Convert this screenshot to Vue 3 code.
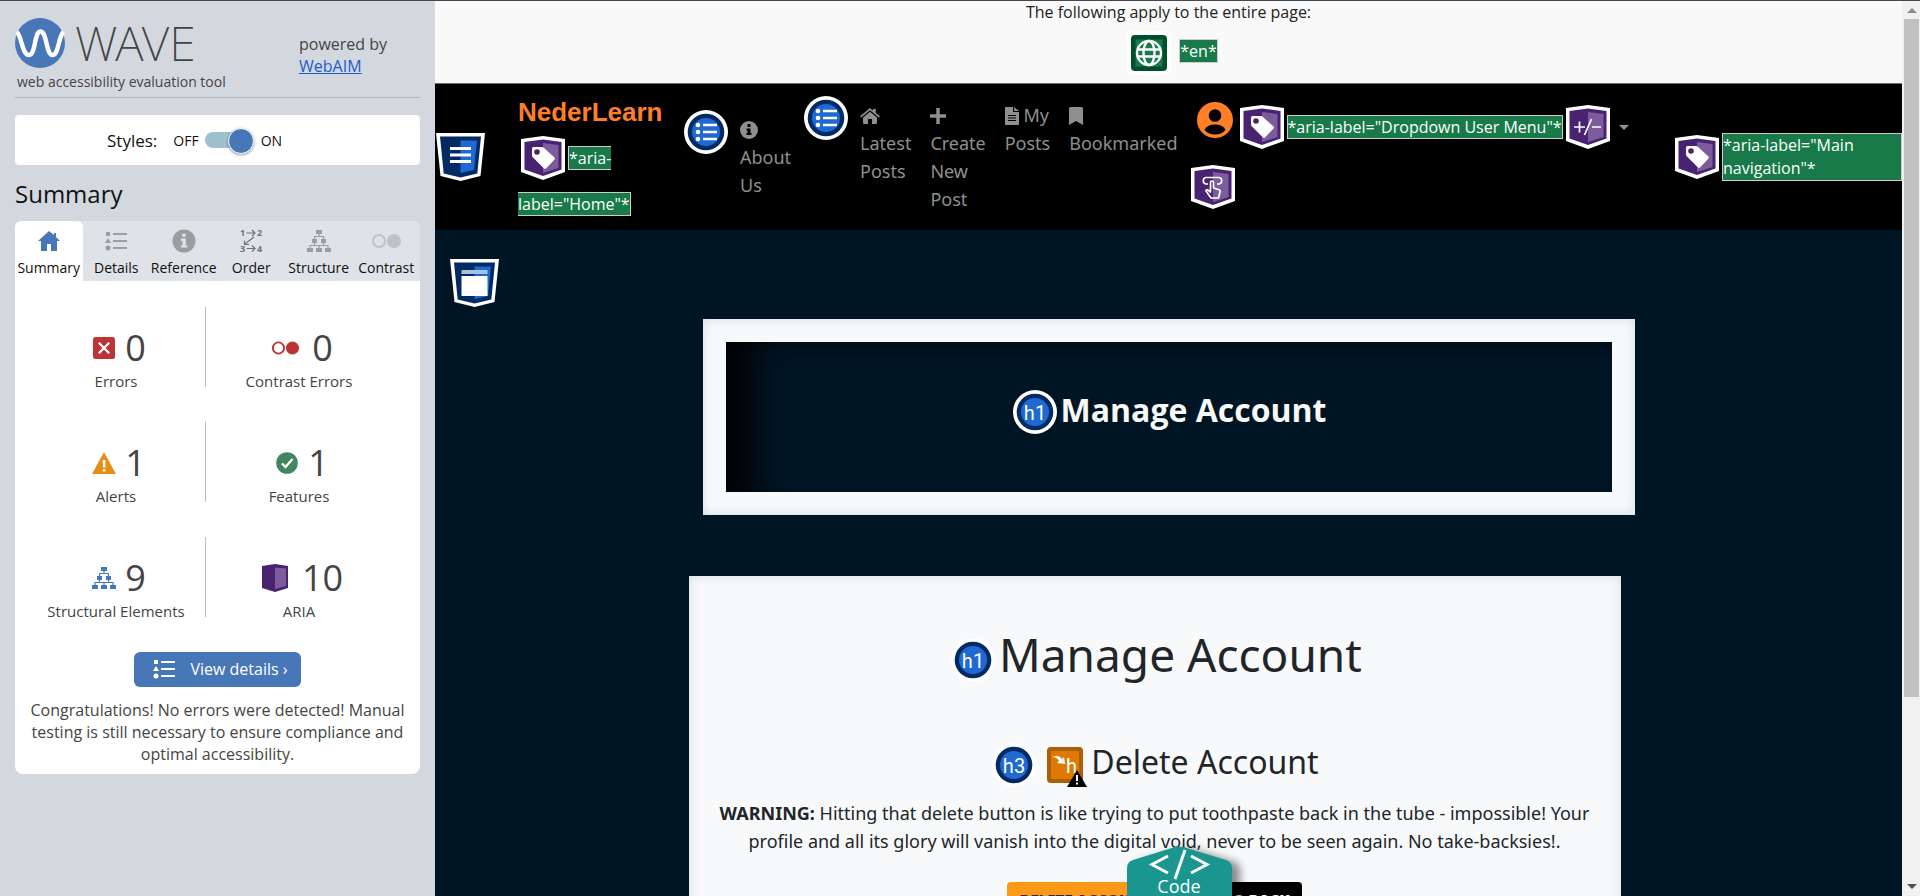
<script setup>
import { ref } from 'vue'

const stylesOn = ref(true)
const activeTab = ref('Summary')

const tabs = [
  { name: 'Summary', icon: 'i-home' },
  { name: 'Details', icon: 'i-details' },
  { name: 'Reference', icon: 'i-info' },
  { name: 'Order', icon: 'i-order' },
  { name: 'Structure', icon: 'i-tree' },
  { name: 'Contrast', icon: 'i-contrast' },
]

const stats = [
  { label: 'Errors', count: 0, icon: 'i-error', tone: 'red' },
  { label: 'Contrast Errors', count: 0, icon: 'i-contrast', tone: 'red wide' },
  { label: 'Alerts', count: 1, icon: 'i-alert', tone: 'amber' },
  { label: 'Features', count: 1, icon: 'i-check', tone: 'green' },
  { label: 'Structural Elements', count: 9, icon: 'i-tree', tone: 'blue' },
  { label: 'ARIA', count: 10, icon: 'i-cube', tone: 'purple wide' },
]
</script>

<template>
  <svg class="sprite" aria-hidden="true">
    <symbol id="i-home" viewBox="0 0 24 24">
      <path d="M12 2 1 12h3v10h6v-7h4v7h6V12h3l-4-4V4h-2v2z" fill="currentColor" />
    </symbol>
    <symbol id="i-details" viewBox="0 0 24 24">
      <path d="M2 3h4v4H2zM4 9l3 5H1zM9 4h14v2H9zM9 11h14v2H9zM9 18h14v2H9z" fill="currentColor" />
      <circle cx="4" cy="19" r="2.5" fill="currentColor" />
    </symbol>
    <symbol id="i-info" viewBox="0 0 24 24">
      <circle cx="12" cy="12" r="11.5" fill="currentColor" />
      <path d="M10.2 4.8h3.6v3h-3.6zM8.8 9.6h5v6.8h1.6v2.2H8.8v-2.2h1.6v-4.6H8.8z" fill="#dfe2e7" />
    </symbol>
    <symbol id="i-order" viewBox="0 0 24 24">
      <path d="M7.500 4H16M13 1l3 3-3 3M15 8 6 15M5.500 11.500v4h4.500M7.500 19.500H16M13 16.500l3 3-3 3" fill="none" stroke="currentColor" stroke-width="1.200" />
      <g fill="currentColor" font-family="Open Sans, sans-serif" font-size="9" font-weight="700">
        <text x="1" y="7">1</text><text x="18" y="7">2</text>
        <text x="1" y="23">3</text><text x="18" y="23">4</text>
      </g>
    </symbol>
    <symbol id="i-tree" viewBox="0 0 24 24">
      <path d="M9 1h6v4H9zM5 10h5v4H5zM14 10h5v4h-5zM0 19h6v4H0zM9 19h6v4H9zM18 19h6v4h-6z" fill="currentColor" />
      <path d="M12 5v2.500M7.500 10V7.500h9V10M7.500 14v2.500M16.500 14v2.500M3 19v-2.500h18V19M12 16.500V19" fill="none" stroke="currentColor" stroke-width="1.200" />
    </symbol>
    <symbol id="i-contrast" viewBox="0 0 30 24">
      <circle cx="8" cy="12" r="6" fill="none" stroke="currentColor" stroke-width="2" />
      <circle cx="23" cy="12" r="7" fill="currentColor" />
    </symbol>
    <symbol id="i-error" viewBox="0 0 24 24">
      <rect x="1" y="1" width="22" height="22" rx="2.500" fill="currentColor" />
      <path d="m6.800 6.800 10.400 10.400M17.200 6.800 6.800 17.200" stroke="#fff" stroke-width="2.300" />
    </symbol>
    <symbol id="i-alert" viewBox="0 0 24 24">
      <path d="M12 1 24 23H0z" fill="currentColor" />
      <path d="M10.800 9h2.600v7.500h-2.600zM10.800 18h2.600v2.600h-2.600z" fill="#fff" />
    </symbol>
    <symbol id="i-check" viewBox="0 0 24 24">
      <circle cx="12" cy="12" r="10.800" fill="currentColor" />
      <path d="m7 12.500 3.500 3.500 7-8" fill="none" stroke="#fff" stroke-width="2.400" />
    </symbol>
    <symbol id="i-cube" viewBox="0 0 28 28">
      <path d="M1 2 14 0l13 2v22l-13 4-13-4z" fill="#492270" />
      <path d="M14 3.500 25 4.500V22l-11 3z" fill="#7d5c9e" />
    </symbol>
    <symbol id="i-ring" viewBox="0 0 44 44">
      <circle cx="22" cy="22" r="22" fill="#fff" />
      <circle cx="22" cy="22" r="18.300" fill="#022a63" />
      <circle cx="22" cy="22" r="14" fill="#1e69d2" />
    </symbol>
    <symbol id="i-list" viewBox="0 0 44 44">
      <use href="#i-ring" />
      <path d="M19 15h14M19 22h14M19 29h14" stroke="#fff" stroke-width="2.400" />
      <g fill="#fff"><circle cx="14" cy="15" r="2.300" /><circle cx="14" cy="22" r="2.300" /><circle cx="14" cy="29" r="2.300" /></g>
    </symbol>
    <symbol id="i-h1" viewBox="0 0 44 44">
      <use href="#i-ring" />
      <text x="22" y="30" text-anchor="middle" fill="#fff" font-family="Roboto, sans-serif" font-size="20" font-weight="400">h1</text>
    </symbol>
    <symbol id="i-h3" viewBox="0 0 44 44">
      <use href="#i-ring" />
      <text x="22" y="30" text-anchor="middle" fill="#fff" font-family="Roboto, sans-serif" font-size="20" font-weight="400">h3</text>
    </symbol>
    <symbol id="i-skipped" viewBox="0 0 44 44">
      <rect x="4" y="4" width="36" height="36" rx="4" fill="#ab5f06" />
      <rect x="8" y="8" width="28" height="28" rx="1" fill="#de7a04" />
      <path d="M9 14c5-2 8-1 10 2l2-2 1 7-8-1 2-2c-1-2-3-4-7-4z" fill="#fff" />
      <text x="23" y="30" fill="#fff" font-family="Roboto, sans-serif" font-size="20" font-weight="400">h</text>
      <path d="m34 27 10 17H24z" fill="#000" />
      <path d="M33 32h2v6h-2zM33 39.500h2v2h-2z" fill="#fff" />
    </symbol>
    <symbol id="i-globe" viewBox="0 0 44 44">
      <rect x="0" y="0" width="44" height="44" rx="5" fill="#fff" />
      <rect x="4" y="4" width="36" height="36" rx="4" fill="#02502a" />
      <rect x="8.500" y="8.500" width="27" height="27" fill="#177a48" />
      <g fill="none" stroke="#fff" stroke-width="2.400">
        <circle cx="22" cy="22" r="12" /><ellipse cx="22" cy="22" rx="5.500" ry="12" />
        <path d="M11 18.500h22M11 25.500h22" />
      </g>
    </symbol>
    <symbol id="i-shield" viewBox="0 0 50 48">
      <path d="M0 0h49l-4.500 43L24.500 48 4.500 43z" fill="#fff" />
      <path d="M4 3.500h41L41.300 40.500 24.500 44.500 7.700 40.500z" fill="#022a63" />
      <path d="M24.500 7.500H41L38 37l-13.500 3z" fill="#1e69d2" />
    </symbol>
    <symbol id="i-nav" viewBox="0 0 50 48">
      <use href="#i-shield" />
      <path d="M14 15.500h21M14 22h21M14 28.500h21" stroke="#fff" stroke-width="3" />
    </symbol>
    <symbol id="i-main" viewBox="0 0 50 48">
      <use href="#i-shield" />
      <path d="M11.500 11h26v4h-26z" fill="#a9c0e2" />
      <path d="M11.500 17h26v20h-26z" fill="#fff" />
    </symbol>
    <symbol id="i-aria" viewBox="0 0 44 44">
      <path d="M0 3 22 0l22 3v33l-22 8-22-8z" fill="#fff" />
      <path d="M3.500 6 22 3.500 40.500 6v27.500L22 40 3.500 33.500z" fill="#492270" />
      <path d="M22 7 37.500 9v23L22 37z" fill="#7d5c9e" />
    </symbol>
    <symbol id="i-tag" viewBox="0 0 44 44">
      <use href="#i-aria" />
      <path d="M11 12.500q0-1.500 1.500-1.500H21q1 0 2 1l10.500 9.500q.8 1 0 2L25 32.500q-1 .8-2 0L11.500 21q-.5-1-.5-2z" fill="#fff" />
      <circle cx="16" cy="16" r="2.800" fill="#492270" />
    </symbol>
    <symbol id="i-expand" viewBox="0 0 44 44">
      <use href="#i-aria" />
      <path d="M8 22h11M13.500 16.500v11M25.500 14 18.500 30M26 22h9" stroke="#fff" stroke-width="1.700" />
    </symbol>
    <symbol id="i-press" viewBox="0 0 44 44">
      <use href="#i-aria" />
      <g fill="none" stroke="#fff" stroke-width="1.700" stroke-linejoin="round">
        <path d="M17 19h-2a3.300 3.300 0 0 1 0-6.500h13a3.300 3.300 0 0 1 0 6.500h-2" />
        <path d="M19.500 27V17.500q0-1.500 1.500-1.500t1.500 1.500V23l5 1.500q2 .5 1.500 2.500L27.500 33H20l-5-7q0-1.500 1.500-1.200z" />
      </g>
    </symbol>
    <symbol id="i-fa-info" viewBox="0 0 18 18">
      <circle cx="9" cy="9" r="9" fill="currentColor" />
      <path d="M7.500 3h3v3h-3zM6.500 7.500h4v4.500h1v2h-5v-2h1V9.500h-1z" fill="#000" />
    </symbol>
    <symbol id="i-fa-home" viewBox="0 0 20 18">
      <path d="M10 4.800 17 10.500V16q0 1-1 1h-4v-5H8v5H4q-1 0-1-1v-5.500zM10 1l3 2.500V2h2.800v4L20 9.300l-1.200 1.200L10 3.300 1.200 10.500 0 9.300z" fill="currentColor" />
    </symbol>
    <symbol id="i-fa-plus" viewBox="0 0 16 18">
      <path d="M6.300 1h3.400v6.300H16v3.400H9.700V17H6.300v-6.300H0V7.300h6.300z" fill="currentColor" />
    </symbol>
    <symbol id="i-fa-file" viewBox="0 0 14 18">
      <path d="M0 1q0-1 1-1h7v5h6v12q0 1-1 1H1q-1 0-1-1zM9.200 0 14 4H9.200z" fill="currentColor" />
      <path d="M3 8.500h8M3 11h8M3 13.500h8" stroke="#000" stroke-width="1" />
    </symbol>
    <symbol id="i-fa-bookmark" viewBox="0 0 14 18">
      <path d="M0 1.500Q0 0 1.500 0h11Q14 0 14 1.500V18l-7-4-7 4z" fill="currentColor" />
    </symbol>
  </svg>

  <div class="window">
    <aside class="sidebar">
      <header class="masthead">
        <div>
          <div class="logo">
            <svg viewBox="0 0 50 50" width="50" height="50" aria-hidden="true">
              <circle cx="25" cy="25" r="25" fill="#4877b8" />
              <path d="M2 14C7 19 7 37 14 37S19 13.500 25.500 13.500 31 37 37.500 37 43 19 48.500 14" fill="none" stroke="#fff" stroke-width="4.400" />
            </svg>
            <span class="wordmark">WAVE</span>
          </div>
          <p class="tagline">web accessibility evaluation tool</p>
        </div>
        <p class="powered">powered by<br /><a href="#webaim">WebAIM</a></p>
      </header>

      <div class="styles-box">
        <span class="styles-name">Styles:</span>
        <label class="switch">
          <span>OFF</span>
          <input v-model="stylesOn" type="checkbox" role="switch" aria-label="Styles" />
          <span class="on">ON</span>
        </label>
      </div>

      <h2 class="heading">Summary</h2>

      <div class="tabs" role="tablist">
        <button
          v-for="tab in tabs"
          :key="tab.name"
          type="button"
          role="tab"
          :aria-selected="activeTab === tab.name"
          :class="['tab', 'tab-' + tab.name.toLowerCase(), { active: activeTab === tab.name }]"
          @click="activeTab = tab.name"
        >
          <svg class="tab-icon"><use :href="'#' + tab.icon" /></svg>
          <span>{{ tab.name }}</span>
        </button>
      </div>

      <section class="panel">
        <ul class="stats">
          <li v-for="stat in stats" :key="stat.label">
            <div class="figure" :class="stat.tone">
              <svg><use :href="'#' + stat.icon" /></svg>
              <span>{{ stat.count }}</span>
            </div>
            <div class="label">{{ stat.label }}</div>
          </li>
        </ul>
        <button type="button" class="details">
          <svg width="24" height="24"><use href="#i-details" /></svg>
          <span>View details ›</span>
        </button>
        <p class="message">
          Congratulations! No errors were detected! Manual testing is still necessary to ensure compliance and optimal accessibility.
        </p>
      </section>
    </aside>

    <div class="page">
      <div class="entire">
        <p>The following apply to the entire page:</p>
        <div class="entire-row">
          <svg class="badge"><use href="#i-globe" /></svg>
          <span class="note">*en*</span>
        </div>
      </div>

      <nav class="nav" aria-label="Main navigation">
        <svg class="shield"><use href="#i-nav" /></svg>
        <div class="brand">
          <a href="#home" class="brand-name">NederLearn</a>
          <div class="brand-note"><svg class="badge"><use href="#i-tag" /></svg><span class="note">*aria-label="Home"*</span></div>
        </div>
        <div class="group low">
          <svg class="badge"><use href="#i-list" /></svg>
          <a href="#about"><svg width="18" height="18"><use href="#i-fa-info" /></svg> About Us</a>
        </div>
        <div class="group">
          <svg class="badge"><use href="#i-list" /></svg>
          <a href="#latest"><svg width="20" height="18"><use href="#i-fa-home" /></svg> Latest Posts</a>
          <a href="#create"><svg width="16" height="18"><use href="#i-fa-plus" /></svg> Create New Post</a>
          <a href="#mine"><svg width="14" height="18"><use href="#i-fa-file" /></svg>&nbsp;My Posts</a>
          <a href="#bookmarked"><svg width="14" height="18"><use href="#i-fa-bookmark" /></svg> Bookmarked</a>
        </div>
        <div class="user">
          <button type="button" class="user-row">
            <svg class="avatar" viewBox="0 0 36 36">
              <circle cx="18" cy="18" r="18" fill="#ff7f27" />
              <circle cx="18" cy="13.500" r="6.300" fill="#000" />
              <path d="M7.500 28q2-5.500 10.500-5.500T28.500 28q-4 4.500-10.500 4.500T7.500 28z" fill="#000" />
            </svg>
            <svg class="badge"><use href="#i-tag" /></svg>
            <span class="note">*aria-label="Dropdown User Menu"*</span>
            <svg class="badge"><use href="#i-expand" /></svg>
            <span class="caret"></span>
          </button>
          <svg class="badge press"><use href="#i-press" /></svg>
        </div>
        <div class="nav-end">
          <svg class="badge"><use href="#i-tag" /></svg>
          <span class="note">*aria-label="Main navigation"*</span>
        </div>
      </nav>

      <main class="main">
        <svg class="shield"><use href="#i-main" /></svg>
        <section class="card hero">
          <div class="hero-inner">
            <h1><svg class="badge"><use href="#i-h1" /></svg>Manage Account</h1>
          </div>
        </section>
        <section class="card body">
          <h1><svg class="badge"><use href="#i-h1" /></svg>Manage Account</h1>
          <h3>
            <svg class="badge"><use href="#i-h3" /></svg>
            <svg class="badge"><use href="#i-skipped" /></svg>
            <span>Delete Account</span>
          </h3>
          <p>
            <strong>WARNING:</strong> Hitting that delete button is like trying to put toothpaste back in the tube - impossible! Your profile and all its glory will vanish into the digital void, never to be seen again. No take-backsies!.
          </p>
          <div class="actions">
            <button type="button" class="delete">DELETE ACCOUNT</button>
            <button type="button" class="back">GO BACK</button>
          </div>
        </section>
      </main>
    </div>

    <div class="scrollbar" aria-hidden="true">
      <span class="arrow up"></span>
      <span class="thumb"></span>
      <span class="arrow down"></span>
    </div>

    <div class="dock">
      <button type="button" class="code">
        <svg class="code-shape" viewBox="0 0 105 64" width="105" height="64" aria-hidden="true">
          <path d="M0 22q0-6 6-8L48 1q4-1 8 0l43 13q6 2 6 8v42H0z" fill="#18968f" />
          <path d="M41 10 25 18.500 41 27M64 10l16 8.500L64 27M58 4 48 33" fill="none" stroke="#fff" stroke-width="3" />
        </svg>
        <span>Code</span>
      </button>
    </div>
  </div>
</template>

<style>
body {
  margin: 0;
  overflow: hidden;
}
</style>

<style scoped>
* {
  box-sizing: border-box;
}
.sprite {
  position: absolute;
  width: 0;
  height: 0;
}
p,
h1,
h2,
h3,
ul {
  margin: 0;
  padding: 0;
}
button {
  border: 0;
  padding: 0;
  background: none;
  font: inherit;
  color: inherit;
}
.window {
  position: relative;
  display: flex;
  height: 100vh;
  overflow: hidden;
  border-top: 1px solid #45484d;
  font-family: "Open Sans", "Noto Sans", sans-serif;
  font-size: 16px;
  color: #444;
}

/* Sidebar */
.sidebar {
  flex: 0 0 435px;
  padding: 17px 15px 0;
  background: #d3d8df;
}
.masthead {
  display: flex;
  justify-content: space-between;
  height: 80px;
  border-bottom: 1px solid #b0b4ba;
}
.logo {
  display: flex;
  align-items: center;
  gap: 10px;
  height: 50px;
}
.wordmark {
  font-family: "Noto Sans", sans-serif;
  font-size: 48px;
  font-weight: 200;
  line-height: 50px;
}
.tagline {
  padding-left: 2px;
  font-size: 14px;
  line-height: 28px;
}
.powered {
  width: 121px;
  padding-top: 15px;
  line-height: 22px;
}
.powered a {
  color: #1a5cc8;
}
.styles-box {
  display: flex;
  align-items: center;
  height: 50px;
  margin-top: 17px;
  padding-left: 92px;
  border-radius: 4px;
  background: #fff;
  color: #111;
}
.styles-name {
  font-size: 17px;
}
.switch {
  display: flex;
  align-items: center;
  margin-left: 16px;
  font-size: 14px;
}
.switch input {
  appearance: none;
  position: relative;
  width: 40px;
  height: 16px;
  margin: 0 0 0 6px;
  border-radius: 8px;
  background: #9fc1cc;
}
.switch input::after {
  content: "";
  position: absolute;
  top: -4px;
  left: -6px;
  width: 24px;
  height: 24px;
  border: 1px solid #fff;
  border-radius: 50%;
  background: #4877b8;
  box-shadow: 0 1px 3px rgba(0, 0, 0, 0.4);
}
.switch input:checked::after {
  left: 23px;
}
.switch .on {
  margin-left: 16px;
}
.heading {
  margin-top: 13px;
  font-size: 24px;
  font-weight: 400;
  line-height: 32px;
  color: #111;
}
.tabs {
  display: grid;
  grid-template-columns: repeat(6, minmax(0, 1fr));
  height: 60px;
  margin-top: 11px;
  border-radius: 6px 6px 0 0;
  background: #dfe2e7;
}
.tab {
  display: flex;
  flex-direction: column;
  align-items: center;
  gap: 5px;
  padding-top: 8px;
  font-size: 14px;
  line-height: 20px;
  color: #111;
}
.tab.active {
  border-radius: 6px 6px 0 0;
  background: #fff;
}
.tab-icon {
  width: 24px;
  height: 24px;
  color: #9b9da1;
}
.tab.active .tab-icon {
  color: #4877b8;
}
.tab-order .tab-icon {
  color: #707276;
}
.tab-contrast .tab-icon {
  width: 30px;
  color: #bfc1c5;
}
.panel {
  padding: 26px 12px 9px;
  border-radius: 0 0 8px 8px;
  background: #fff;
  text-align: center;
}
.stats {
  display: grid;
  grid-template-columns: 179fr 186fr;
  row-gap: 35px;
  margin-right: 16px;
  list-style: none;
}
.stats li {
  height: 80px;
  padding-top: 21px;
}
.stats li:nth-child(odd) {
  border-right: 1px solid #bbb;
}
.figure {
  display: flex;
  justify-content: center;
  align-items: center;
  gap: 9px;
  height: 40px;
  padding-left: 6px;
}
.figure svg {
  width: 24px;
  height: 24px;
}
.figure.wide {
  gap: 13px;
}
.figure.wide svg {
  width: 28px;
  height: 28px;
}
.figure span {
  font-size: 36px;
  line-height: 40px;
}
.red svg {
  color: #bd3338;
}
.amber svg {
  color: #e68f17;
}
.green svg {
  color: #41865f;
}
.blue svg {
  color: #4877b8;
}
.label {
  font-size: 15px;
  line-height: 26px;
}
.details {
  display: inline-flex;
  align-items: center;
  gap: 14px;
  height: 35px;
  margin: 35px 0 12px;
  padding: 0 13px 2px 18px;
  border-radius: 6px;
  background: #4877b8;
  color: #fff;
}
.message {
  line-height: 22px;
}

/* Evaluated page */
.page {
  flex: 1;
  min-width: 0;
  background: #001524;
}
.badge {
  flex: none;
  width: 44px;
  height: 44px;
}
.shield {
  flex: none;
  width: 50px;
  height: 48px;
}
.note {
  border: 1px solid #ccc;
  background: #177a48;
  color: #fff;
  font-size: 16px;
  line-height: 22px;
}
.entire {
  height: 83px;
  border-bottom: 1px solid #6b6b6b;
  background: #f9f9f9;
  color: #222;
  text-align: center;
}
.entire p {
  line-height: 22px;
}
.entire-row {
  display: flex;
  justify-content: center;
  align-items: flex-start;
  gap: 8px;
  margin-top: 8px;
  padding-left: 8px;
}
.entire-row .note {
  margin-top: 8px;
}
.nav {
  display: flex;
  align-items: flex-start;
  height: 146px;
  background: #000;
  color: #8f8f8f;
}
.nav > .shield {
  margin: 49px 0 0 1px;
}
.brand {
  width: 145px;
  margin: 11px 0 0 32px;
}
.brand-name {
  display: block;
  margin-bottom: 6px;
  font-family: "Liberation Sans", sans-serif;
  font-size: 26px;
  font-weight: 700;
  line-height: 34px;
  color: #ff7f27;
  text-decoration: none;
}
.brand-note {
  line-height: 46px;
}
.brand-note .badge {
  margin: 0 3px;
  vertical-align: -16px;
}
.brand-note .note {
  line-height: 46px;
}
.group {
  display: flex;
  align-items: flex-start;
  gap: 19px;
  margin: 12px 0 0 13px;
}
.group.low {
  margin: 26px 0 0 21px;
}
.group .badge {
  margin-right: -7px;
}
.group a {
  width: min-content;
  padding-top: 5px;
  font-family: "Noto Sans", sans-serif;
  font-size: 18px;
  line-height: 28px;
  color: inherit;
  text-decoration: none;
}
.group a svg {
  vertical-align: -3px;
}
.user {
  margin: 18px 0 0 13px;
}
.user-row {
  display: flex;
  align-items: center;
  gap: 3px;
  padding-left: 6px;
}
.avatar {
  width: 36px;
  height: 36px;
  margin: 0 4px 14px 0;
}
.caret {
  margin-left: 6px;
  border: 5px solid transparent;
  border-top-color: #8f8f8f;
  border-bottom: 0;
}
.press {
  display: block;
  margin-top: 13px;
}
.nav-end {
  display: flex;
  align-items: center;
  gap: 3px;
  width: 227px;
  margin: 49px 0 0 auto;
}
.nav-end .note {
  flex: 1;
  line-height: 23px;
}
.main {
  padding: 29px 15px 0;
}
.main > .shield {
  display: block;
}
.card {
  max-width: 932px;
  margin: 0 auto;
  background: #f8f9fb;
  box-shadow: inset 0 0 12px rgba(0, 0, 0, 0.12);
}
.hero {
  margin-top: 12px;
  padding: 23px;
}
.hero-inner {
  display: flex;
  align-items: center;
  justify-content: center;
  height: 150px;
  padding: 0 0 14px 2px;
  background: #001524;
  box-shadow: inset 50px 0 30px -20px rgba(0, 0, 0, 0.85), inset 0 20px 20px -20px rgba(0, 0, 0, 0.5);
}
h1,
h3 {
  display: flex;
  align-items: center;
  justify-content: center;
}
.hero h1 {
  gap: 4px;
  height: 44px;
  font-size: 32px;
  font-weight: 700;
  line-height: 44px;
  color: #f8f8f6;
}
.hero .badge {
  margin-top: 4px;
}
.body {
  position: relative;
  left: -14px;
  height: 400px;
  margin-top: 61px;
  padding: 42px 25px 0;
  font-family: "Noto Sans", sans-serif;
  color: #212529;
  text-align: center;
}
.body h1 {
  gap: 4px;
  padding-left: 4px;
  font-size: 46px;
  font-weight: 400;
  line-height: 72px;
}
.body .badge {
  margin-top: 12px;
}
.body h3 {
  gap: 7px;
  height: 44px;
  margin-top: 50px;
  padding-left: 2px;
  font-size: 32px;
  font-weight: 400;
  line-height: 44px;
}
.body h3 .badge {
  margin-top: 6px;
}
.body h3 span {
  margin-left: -3px;
}
.body p {
  margin-top: 15px;
  font-size: 18px;
  line-height: 28px;
}
.actions {
  display: flex;
  justify-content: center;
  gap: 46px;
  margin-top: 27px;
}
.actions button {
  height: 36px;
  padding: 0 12px;
  border-radius: 4px;
  font-family: "Open Sans", sans-serif;
  font-size: 15px;
  font-weight: 800;
}
.delete {
  background: #fb9a19;
  color: #212529;
}
.back {
  background: #000;
  color: #fff;
}

/* Code panel handle, floating over the evaluated page */
.dock {
  position: absolute;
  right: 0;
  bottom: -14px;
  left: 438px;
  display: flex;
  justify-content: center;
  pointer-events: none;
}
.code {
  position: relative;
  color: #fff;
  font-size: 18px;
  pointer-events: auto;
}
.code-shape {
  display: block;
  filter: drop-shadow(8px 2px 4px rgba(0, 0, 0, 0.45));
}
.code span {
  position: absolute;
  right: 0;
  bottom: 11px;
  left: 0;
  line-height: 26px;
}

/* Window scrollbar */
.scrollbar {
  flex: 0 0 18px;
  display: flex;
  flex-direction: column;
  align-items: center;
  padding: 7px 1px 7px 2px;
  background: #f1f1f1;
}
.thumb {
  width: 100%;
  height: 77%;
  margin-top: 6px;
  background: #c1c1c1;
}
.arrow {
  border: 5px solid transparent;
}
.arrow.up {
  border-top: 0;
  border-bottom-color: #8b8b8b;
}
.arrow.down {
  margin-top: auto;
  border-bottom: 0;
  border-top-color: #505050;
}
</style>
